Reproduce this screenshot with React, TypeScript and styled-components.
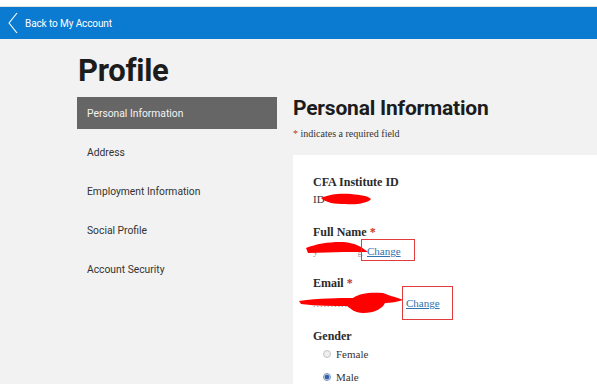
import React from 'react';
import styled, { createGlobalStyle } from 'styled-components';

const GlobalStyle = createGlobalStyle`
  html, body {
    margin: 0;
    padding: 0;
    background: #f2f2f2;
  }
  body {
    font-family: Roboto, "Liberation Sans", sans-serif;
    color: #222;
  }
`;

const Page = styled.div`
  width: 597px;
  height: 384px;
  overflow: hidden;
  background: #f2f2f2;
`;

const TopStrip = styled.div`
  height: 6px;
  background: #fff;
  border-bottom: 1px solid #e2e2e2;
`;

const BlueBar = styled.div`
  height: 32px;
  background: #0b7ad1;
  display: flex;
  align-items: center;
  padding-left: 8px;
  gap: 7px;
  color: #fff;
  font-size: 10px;
  letter-spacing: -0.1px;
`;

const Main = styled.div`
  padding: 16px 0 0 77px;
`;

const PageTitle = styled.h1`
  margin: 0 0 11px 1px;
  font-size: 31px;
  line-height: 1;
  font-weight: 700;
  letter-spacing: -0.3px;
  color: #1c1c1c;
`;

const Columns = styled.div`
  display: grid;
  grid-template-columns: 200px 1fr;
  column-gap: 16px;
`;

const SideNav = styled.nav`
  display: flex;
  flex-direction: column;
  gap: 7px;
`;

const NavItem = styled.div<{ $active?: boolean }>`
  height: 32px;
  display: flex;
  align-items: center;
  padding-left: 10px;
  font-size: 10.3px;
  background: ${(p) => (p.$active ? '#666666' : 'transparent')};
  color: ${(p) => (p.$active ? '#f4f4f4' : '#333')};
`;

const Content = styled.div`
  padding-top: 1px;
`;

const SectionTitle = styled.h2`
  margin: 0;
  font-size: 21px;
  line-height: 1;
  font-weight: 700;
  letter-spacing: -0.2px;
  color: #1c1c1c;
`;

const RequiredNote = styled.p`
  margin: 7px 0 0;
  font-family: "Liberation Serif", serif;
  font-size: 10px;
  line-height: 16px;
  color: #333;
`;

const Star = styled.span`
  color: #c0392b;
`;

const Card = styled.div`
  margin-top: 13px;
  background: #fff;
  height: 240px;
  padding: 19px 0 0 20px;
  font-family: "Liberation Serif", serif;
`;

const Label = styled.div`
  font-weight: 700;
  font-size: 12px;
  line-height: 16px;
  color: #2a2a2a;
`;

const Field = styled.div<{ $gap: number }>`
  margin-bottom: ${(p) => p.$gap}px;
`;

const ValueRow = styled.div<{ $height: number }>`
  position: relative;
  height: ${(p) => p.$height}px;
  display: flex;
  align-items: center;
  font-size: 11px;
  color: #333;
`;

const Faint = styled.span<{ $width: number }>`
  display: inline-block;
  width: ${(p) => p.$width}px;
  overflow: hidden;
  white-space: nowrap;
  color: #999;
  font-size: 10px;
  letter-spacing: 1px;
`;

const ChangeWrap = styled.span`
  position: relative;
`;

const ChangeLink = styled.a`
  color: #2f72ad;
  text-decoration: underline;
  font-size: 11px;
  cursor: pointer;
`;

const Highlight = styled.span`
  position: absolute;
  border: 1.5px solid #e23b3b;
  pointer-events: none;
`;

const Scribble = styled.svg`
  position: absolute;
  overflow: visible;
  pointer-events: none;
`;

const RadioList = styled.div`
  padding-left: 10px;
  display: flex;
  flex-direction: column;
  gap: 7px;
  margin-top: 2px;
`;

const RadioRow = styled.label`
  display: flex;
  align-items: center;
  gap: 5px;
  font-size: 11px;
  line-height: 16px;
  color: #333;
`;

const RadioDot = styled.span<{ $checked?: boolean }>`
  width: 6px;
  height: 6px;
  border-radius: 50%;
  border: 1px solid ${(p) => (p.$checked ? '#7a90b5' : '#c4c4c4')};
  background: ${(p) => (p.$checked ? 'radial-gradient(circle, #2f5fa8 45%, #dfe6f0 65%)' : '#eee')};
`;

const Chevron = () => (
  <svg width="10" height="22" viewBox="0 0 10 22" fill="none">
    <polyline points="9,1 1,11 9,21" stroke="#fff" strokeWidth="1.2" strokeLinejoin="round" />
  </svg>
);

export default function App() {
  return (
    <Page>
      <GlobalStyle />
      <TopStrip />
      <BlueBar>
        <Chevron />
        <span>Back to My Account</span>
      </BlueBar>
      <Main>
        <PageTitle>Profile</PageTitle>
        <Columns>
          <SideNav>
            <NavItem $active>Personal Information</NavItem>
            <NavItem>Address</NavItem>
            <NavItem>Employment Information</NavItem>
            <NavItem>Social Profile</NavItem>
            <NavItem>Account Security</NavItem>
          </SideNav>
          <Content>
            <SectionTitle>Personal Information</SectionTitle>
            <RequiredNote>
              <Star>*</Star> indicates a required field
            </RequiredNote>
            <Card>
              <Field $gap={16}>
                <Label>CFA Institute ID</Label>
                <ValueRow $height={18}>
                  ID
                  <Scribble width="50" height="12" style={{ left: 8, top: 3 }} viewBox="0 0 50 12">
                    <path d="M0 5 C8 1, 20 0, 30 1 C40 2, 47 3, 50 6 C47 10, 36 12, 24 11 C14 11, 5 10, 0 5 Z" fill="#f00" />
                  </Scribble>
                </ValueRow>
              </Field>
              <Field $gap={13}>
                <Label>
                  Full Name <Star>*</Star>
                </Label>
                <ValueRow $height={22}>
                  <Faint $width={54}>y&nbsp;&nbsp;&nbsp;&nbsp;&nbsp;&nbsp;&nbsp;&nbsp;&nbsp;&nbsp;&nbsp;g</Faint>
                  <Scribble width="62" height="14" style={{ left: -7, top: 2 }} viewBox="0 0 62 14">
                    <path d="M0 6 C10 2, 22 0, 34 0 C42 0, 50 2, 55 5 L62 10 C54 10, 46 10, 38 10 C26 10, 14 11, 2 11 Z" fill="#f00" />
                  </Scribble>
                  <ChangeWrap>
                    <ChangeLink>Change</ChangeLink>
                    <Highlight style={{ left: -6, right: -14, top: -6, bottom: -4 }} />
                  </ChangeWrap>
                </ValueRow>
              </Field>
              <Field $gap={13}>
                <Label>
                  Email <Star>*</Star>
                </Label>
                <ValueRow $height={24}>
                  <Faint $width={93}>..................</Faint>
                  <Scribble width="104" height="22" style={{ left: -14, top: 1 }} viewBox="0 0 104 22">
                    <path d="M0 9 C20 6, 40 6, 54 6 C60 1, 72 0, 84 1 L92 4 C96 5, 100 6, 104 8 C98 10, 92 11, 86 11 C84 16, 76 21, 64 21 C56 21, 52 17, 48 14 C34 14, 18 14, 2 12 Z" fill="#f00" />
                  </Scribble>
                  <ChangeWrap>
                    <ChangeLink>Change</ChangeLink>
                    <Highlight style={{ left: -4, right: -13, top: -11, bottom: -11 }} />
                  </ChangeWrap>
                </ValueRow>
              </Field>
              <Field $gap={0}>
                <Label>Gender</Label>
                <RadioList>
                  <RadioRow>
                    <RadioDot />
                    Female
                  </RadioRow>
                  <RadioRow>
                    <RadioDot $checked />
                    Male
                  </RadioRow>
                </RadioList>
              </Field>
            </Card>
          </Content>
        </Columns>
      </Main>
    </Page>
  );
}
